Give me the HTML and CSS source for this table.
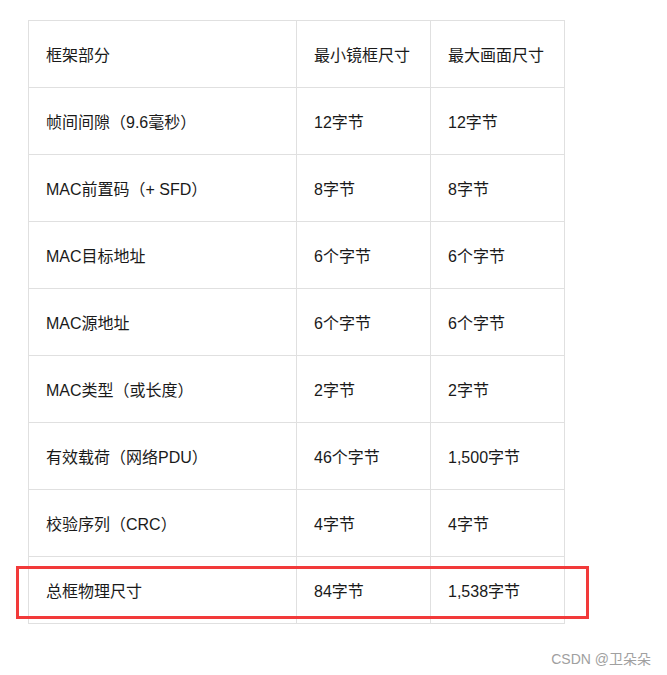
FILE: index.html
```html
<!DOCTYPE html>
<html lang="zh">
<head>
<meta charset="utf-8">
<link rel="stylesheet" href="styles.css">
</head>
<body>
<div class="page">
  <table class="frame-table">
    <tr><td class="c1">框架部分</td><td class="c2">最小镜框尺寸</td><td class="c3">最大画面尺寸</td></tr>
    <tr><td>帧间间隙（9.6毫秒）</td><td>12字节</td><td>12字节</td></tr>
    <tr><td>MAC前置码（+ SFD）</td><td>8字节</td><td>8字节</td></tr>
    <tr><td>MAC目标地址</td><td>6个字节</td><td>6个字节</td></tr>
    <tr><td>MAC源地址</td><td>6个字节</td><td>6个字节</td></tr>
    <tr><td>MAC类型（或长度）</td><td>2字节</td><td>2字节</td></tr>
    <tr><td>有效载荷（网络PDU）</td><td>46个字节</td><td>1,500字节</td></tr>
    <tr><td>校验序列（CRC）</td><td>4字节</td><td>4字节</td></tr>
    <tr><td>总框物理尺寸</td><td>84字节</td><td>1,538字节</td></tr>
  </table>
  <div class="highlight"></div>
  <div class="watermark">CSDN @卫朵朵</div>
</div>
</body>
</html>
```
FILE: styles.css
```css
html, body {
  margin: 0;
  padding: 0;
  background: #fff;
}
.page {
  position: relative;
  width: 667px;
  height: 675px;
  padding: 20px 0 0 28px;
  box-sizing: border-box;
  font-family: "Liberation Sans", "Noto Sans CJK SC", sans-serif;
  font-size: 16px;
  color: #1a1a1a;
}
.frame-table {
  border-collapse: collapse;
  table-layout: fixed;
  width: 536px;
}
.frame-table td {
  border: 1px solid #e0e0e0;
  height: 67px;
  padding: 0 0 0 17px;
  box-sizing: border-box;
  vertical-align: middle;
  white-space: nowrap;
}
.frame-table .c1 { width: 268px; }
.frame-table .c2 { width: 134px; }
.frame-table .c3 { width: 134px; }
.highlight {
  position: absolute;
  left: 16px;
  top: 566px;
  width: 573px;
  height: 53px;
  border: 3px solid #f23a3a;
  box-sizing: border-box;
}
.watermark {
  position: absolute;
  right: 16px;
  top: 648px;
  font-size: 14px;
  color: #a0a0a0;
}
```
